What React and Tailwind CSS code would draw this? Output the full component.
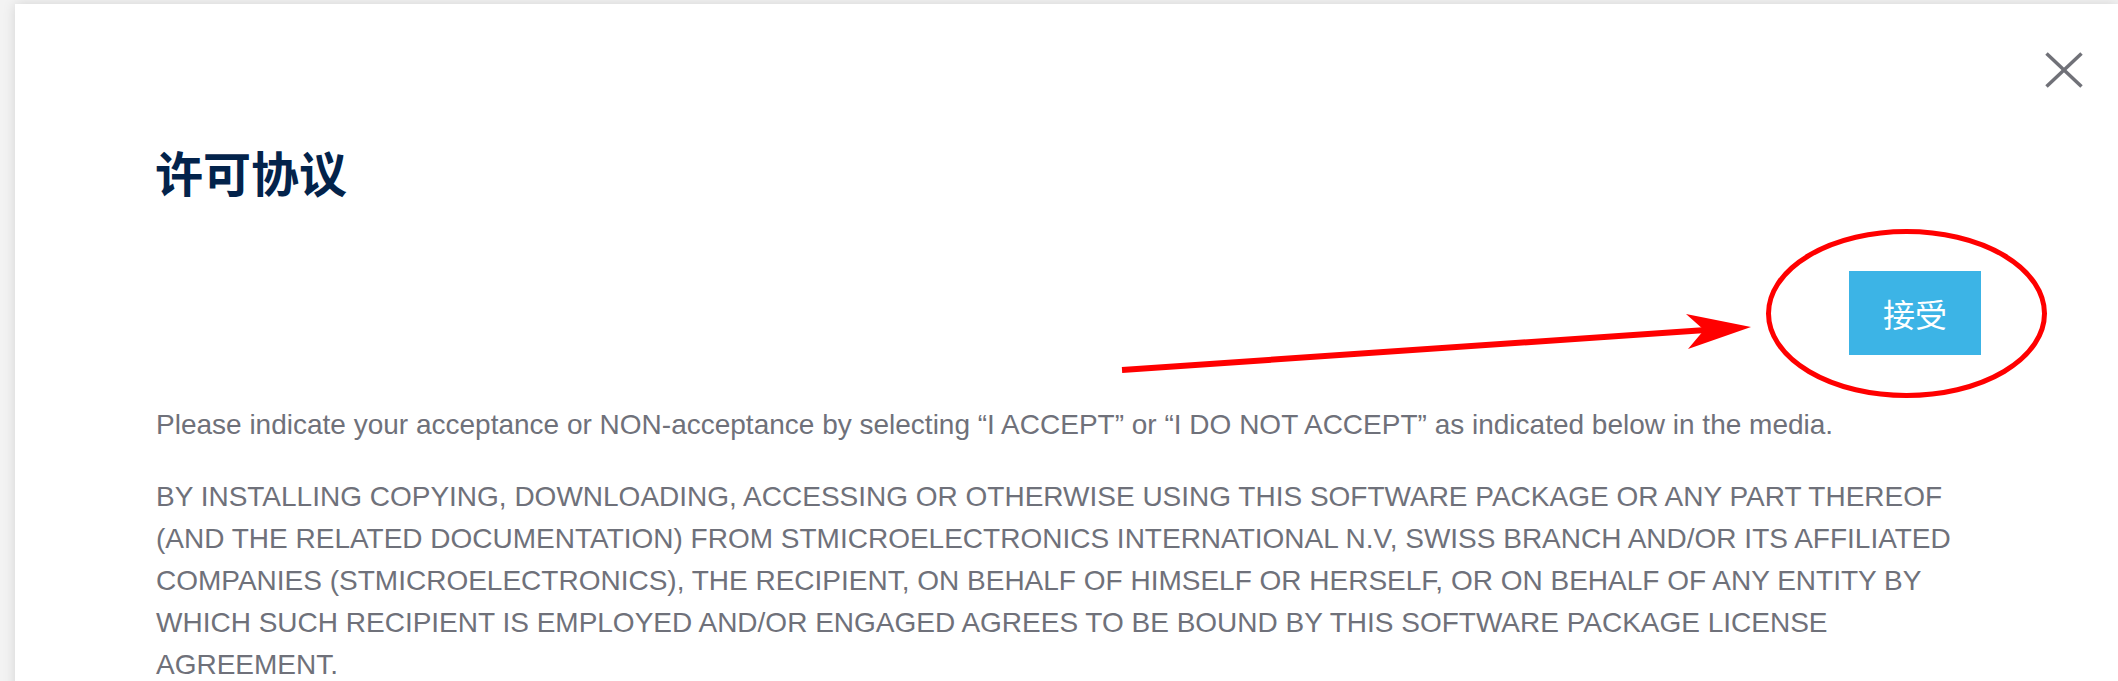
import React from "react";

export default function App() {
  return (
    <div className="relative h-[681px] w-[2118px] overflow-hidden bg-[#f3f3f3] pt-[4px] pl-[15px]">
      <div className="relative h-[800px] bg-white pl-[141px] pr-[137px] pt-[138px] shadow-[0_0_12px_rgba(0,0,0,0.13)]">
        <button className="absolute right-[35px] top-[48px] h-[36px] w-[38px]" aria-label="close">
          <svg width="38" height="36" viewBox="0 0 38 36">
            <line x1="1.5" y1="1.5" x2="36.5" y2="34.5" stroke="#707178" strokeWidth="3.5" />
            <line x1="36.5" y1="1.5" x2="1.5" y2="34.5" stroke="#707178" strokeWidth="3.5" />
          </svg>
        </button>
        <h1 className="m-0 -ml-[1px] text-[48px] font-bold leading-[58px] text-[#03234b] [font-family:'Noto_Sans_CJK_SC',sans-serif]">
          许可协议
        </h1>
        <div className="mt-[71px] flex justify-end">
          <button className="flex h-[84px] w-[132px] items-center justify-center bg-[#3cb4e6] text-[32px] text-white [font-family:'Noto_Sans_CJK_SC',sans-serif]">
            接受
          </button>
        </div>
        <div className="mt-[49px] text-[28px] leading-[42px] text-[#6f717a] [font-family:'Liberation_Sans',Arial,sans-serif]">
          <p className="mb-[30px]">
            Please indicate your acceptance or NON-acceptance by selecting “I ACCEPT” or “I DO NOT ACCEPT” as indicated below in the media.
          </p>
          <p>
            BY INSTALLING COPYING, DOWNLOADING, ACCESSING OR OTHERWISE USING THIS SOFTWARE PACKAGE OR ANY PART THEREOF (AND THE RELATED DOCUMENTATION) FROM STMICROELECTRONICS INTERNATIONAL N.V, SWISS BRANCH AND/OR ITS AFFILIATED COMPANIES (STMICROELECTRONICS), THE RECIPIENT, ON BEHALF OF HIMSELF OR HERSELF, OR ON BEHALF OF ANY ENTITY BY WHICH SUCH RECIPIENT IS EMPLOYED AND/OR ENGAGED AGREES TO BE BOUND BY THIS SOFTWARE PACKAGE LICENSE AGREEMENT.
          </p>
        </div>
      </div>
      <svg
        className="pointer-events-none absolute left-0 top-0"
        width="2118"
        height="681"
        viewBox="0 0 2118 681"
      >
        <line x1="1122" y1="370" x2="1706" y2="330" stroke="#ff0000" strokeWidth="6" />
        <polygon points="1686,314 1751,327 1688,349 1704,330" fill="#ff0000" />
        <ellipse cx="1906.5" cy="313.5" rx="138" ry="82" fill="none" stroke="#ff0000" strokeWidth="5" />
      </svg>
    </div>
  );
}
